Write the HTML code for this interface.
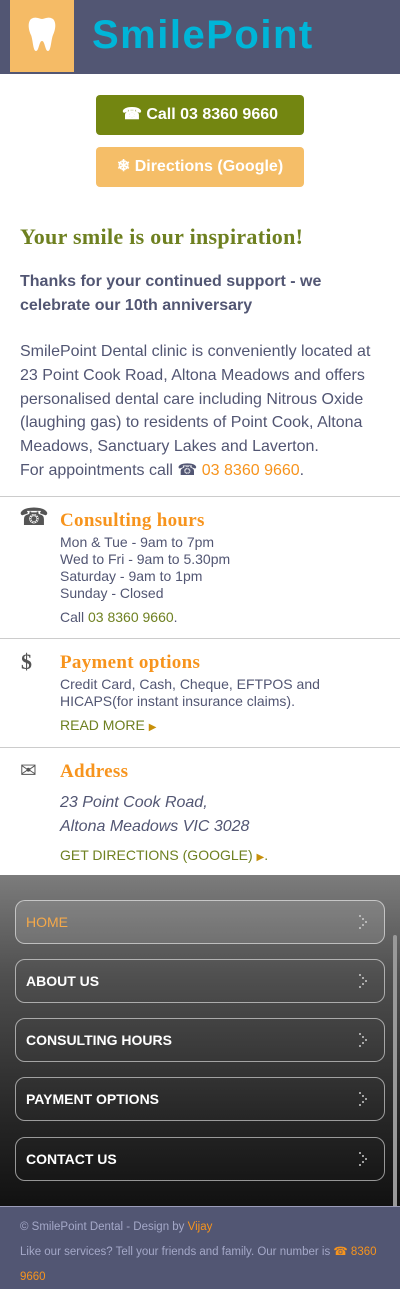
<!DOCTYPE html>
<html><head><meta charset="utf-8"><style>
*{margin:0;padding:0;box-sizing:border-box}
body{width:400px;height:1289px;overflow:hidden;font-family:"Liberation Sans",Helvetica,Arial,sans-serif;color:#525673;background:#fff;position:relative}
.a{position:absolute;white-space:nowrap}
.hdr{position:absolute;left:0;top:0;width:400px;height:74px;background:#525673}
.tag{position:absolute;left:10px;top:0;width:64px;height:72px;background:#f5bb66}
.btn{position:absolute;left:96px;width:208px;height:40px;border-radius:4px;color:#fff;font-size:16px;font-weight:bold;text-align:center;line-height:40px}
.serif{font-family:"Liberation Serif",Georgia,serif}
.hr{position:absolute;left:0;width:400px;height:1px;background:#ccc}
.t{position:absolute;left:60px;font-family:"Liberation Serif",Georgia,serif;color:#f7941d;font-size:19px;font-weight:bold;letter-spacing:0.3px;white-space:nowrap}
.sm{font-size:14px;line-height:17px}
.nav{position:absolute;left:15px;width:370px;height:44px;border:1px solid rgba(255,255,255,.55);border-radius:10px;color:#fff;font-size:14px;font-weight:bold;line-height:42px;padding-left:10px}
.nav svg{position:absolute;right:14px;top:14px}
</style></head><body>
<div class="hdr"></div>
<div class="tag"></div>
<svg class="a" style="left:10px;top:68px" width="64" height="6"><path d="M0 0 H64 V2 L62 4 L60 2 L58 4 L56 2 L54 4 L52 2 L50 4 L48 2 L46 4 L44 2 L42 4 L40 2 L38 4 L36 2 L34 4 L32 2 L30 4 L28 2 L26 4 L24 2 L22 4 L20 2 L18 4 L16 2 L14 4 L12 2 L10 4 L8 2 L6 4 L4 2 L2 4 L0 2Z" fill="#f5bb66"/></svg>
<svg class="a" style="left:27px;top:16px" width="30" height="37"><path d="M4 3 C9 0 12 3 15 3 C18 3 21 0 26 3 C30 7 28 15 26 19 C24 24 24 35 21 35 C18 35 18 25 15 25 C12 25 12 35 9 35 C6 35 6 24 4 19 C2 15 0 7 4 3Z" fill="#fff"/></svg>
<div class="a" style="left:92px;top:13px;font-size:40px;font-weight:bold;color:#00b5d8;letter-spacing:1.5px">SmilePoint</div>
<div class="btn" style="top:95px;background:#738611">☎ Call 03 8360 9660</div>
<div class="btn" style="top:147px;background:#f5be68">❄ Directions (Google)</div>
<div class="a serif" style="left:20px;top:224px;font-size:22px;font-weight:bold;color:#6e8020;letter-spacing:0.3px">Your smile is our inspiration!</div>
<div class="a" style="left:20px;top:270px;font-size:16px;line-height:24px;font-weight:bold">Thanks for your continued support - we<br>celebrate our 10th anniversary</div>
<div class="a" style="left:20px;top:340px;font-size:16px;line-height:23.8px">SmilePoint Dental clinic is conveniently located at<br>23 Point Cook Road, Altona Meadows and offers<br>personalised dental care including Nitrous Oxide<br>(laughing gas) to residents of Point Cook, Altona<br>Meadows, Sanctuary Lakes and Laverton.<br>For appointments call ☎ <span style="color:#f7941d">03 8360 9660</span>.</div>
<div class="hr" style="top:496px"></div>
<div class="a" style="left:19px;top:503px;font-size:24px;color:#555">☎</div>
<div class="t" style="top:510px">Consulting hours</div>
<div class="a sm" style="left:60px;top:534px">Mon &amp; Tue - 9am to 7pm<br>Wed to Fri - 9am to 5.30pm<br>Saturday - 9am to 1pm<br>Sunday - Closed</div>
<div class="a sm" style="left:60px;top:609px">Call <span style="color:#6e8020">03 8360 9660</span>.</div>
<div class="hr" style="top:638px"></div>
<div class="a serif" style="left:21px;top:649px;font-size:22px;font-weight:bold;color:#555">$</div>
<div class="t" style="top:652px">Payment options</div>
<div class="a sm" style="left:60px;top:676px">Credit Card, Cash, Cheque, EFTPOS and<br>HICAPS(for instant insurance claims).</div>
<div class="a sm" style="left:60px;top:717px;color:#6e8020">READ MORE <span style="color:#c8900a;font-size:10px">▶</span></div>
<div class="hr" style="top:747px"></div>
<div class="a" style="left:20px;top:758px;font-size:20px;color:#555">✉</div>
<div class="t" style="top:761px">Address</div>
<div class="a" style="left:60px;top:791px;font-size:16px;line-height:24px;font-style:italic">23 Point Cook Road,<br>Altona Meadows VIC 3028</div>
<div class="a sm" style="left:60px;top:847px;color:#6e8020">GET DIRECTIONS (GOOGLE) <span style="color:#c8900a;font-size:10px">▶</span>.</div>
<div class="a" style="left:0;top:875px;width:400px;height:331px;background:linear-gradient(#7c7c7c,#505050 30%,#252525 75%,#111)"></div>
<div class="a" style="left:393px;top:935px;width:4px;height:354px;border-radius:2px;background:#999"></div>
<div class="nav" style="top:900px;background:rgba(255,255,255,.12);color:#f5a94a;font-weight:normal">HOME<svg width="12" height="14"><g fill="#ccc"><circle cx="2" cy="1" r="1"/><circle cx="5" cy="4" r="1"/><circle cx="8" cy="7" r="1"/><circle cx="5" cy="10" r="1"/><circle cx="2" cy="13" r="1"/></g></svg></div>
<div class="nav" style="top:959px">ABOUT US<svg width="12" height="14"><g fill="#ccc"><circle cx="2" cy="1" r="1"/><circle cx="5" cy="4" r="1"/><circle cx="8" cy="7" r="1"/><circle cx="5" cy="10" r="1"/><circle cx="2" cy="13" r="1"/></g></svg></div>
<div class="nav" style="top:1018px">CONSULTING HOURS<svg width="12" height="14"><g fill="#ccc"><circle cx="2" cy="1" r="1"/><circle cx="5" cy="4" r="1"/><circle cx="8" cy="7" r="1"/><circle cx="5" cy="10" r="1"/><circle cx="2" cy="13" r="1"/></g></svg></div>
<div class="nav" style="top:1077px">PAYMENT OPTIONS<svg width="12" height="14"><g fill="#ccc"><circle cx="2" cy="1" r="1"/><circle cx="5" cy="4" r="1"/><circle cx="8" cy="7" r="1"/><circle cx="5" cy="10" r="1"/><circle cx="2" cy="13" r="1"/></g></svg></div>
<div class="nav" style="top:1137px">CONTACT US<svg width="12" height="14"><g fill="#ccc"><circle cx="2" cy="1" r="1"/><circle cx="5" cy="4" r="1"/><circle cx="8" cy="7" r="1"/><circle cx="5" cy="10" r="1"/><circle cx="2" cy="13" r="1"/></g></svg></div>
<div class="a" style="left:0;top:1206px;width:400px;height:83px;background:#525673;border-top:1px solid #9a9cb8"></div>
<div class="a" style="left:20px;top:1215px;font-size:11.5px;line-height:25px;color:#a4a8c8">© SmilePoint Dental - Design by <span style="color:#f7941d">Vijay</span><br>Like our services? Tell your friends and family. Our number is <span style="color:#f7941d">☎ 8360</span><br><span style="color:#f7941d">9660</span></div>
</body></html>
